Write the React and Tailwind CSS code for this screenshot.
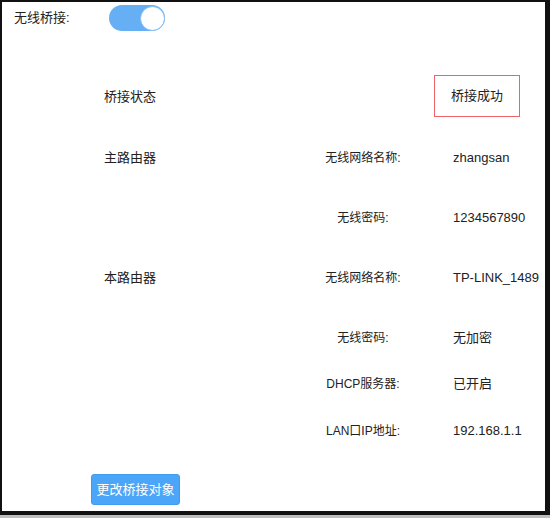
import React from "react";

const font = { fontFamily: '"Liberation Sans", "Noto Sans CJK SC", sans-serif' };

function Row({ left, mid, value, className = "" }) {
  return (
    <div className={`grid grid-cols-[214px_90px_1fr] items-center h-5 pl-[102px] ${className}`}>
      <div className="text-[13px] text-[#222]">{left}</div>
      <div className="text-[12px] text-[#222] text-center whitespace-nowrap">{mid}</div>
      <div className="text-[13px] text-[#222] pl-[45px] whitespace-nowrap">{value}</div>
    </div>
  );
}

export default function App() {
  return (
    <div className="w-[550px] h-[518px] bg-[#bdbdbd]" style={font}>
      <div className="h-[515px] bg-white border-l-2 border-t-2 border-r-[5px] border-b-[4px] border-[#111] flex flex-col">
        <div className="flex items-center h-[26px] mt-[3px] pl-[12px]">
          <div className="w-[95px] text-[13px] text-[#222]">无线桥接:</div>
          <div className="w-[56px] h-[26px] rounded-full bg-[#66aff5] flex items-center justify-end">
            <div className="w-[25px] h-[25px] rounded-full bg-white border border-[#7fbcf6]"></div>
          </div>
        </div>

        <div className="grid grid-cols-[214px_90px_1fr] items-center h-[42px] mt-[44px] pl-[102px]">
          <div className="text-[13px] text-[#222] pt-[2px]">桥接状态</div>
          <div></div>
          <div className="ml-[26px] w-[86px] h-[42px] border border-[#ef6266] flex items-center justify-center text-[13px] text-[#222]">
            桥接成功
          </div>
        </div>

        <Row className="mt-[31px]" left="主路由器" mid="无线网络名称:" value="zhangsan" />
        <Row className="mt-[40px]" left="" mid="无线密码:" value="1234567890" />
        <Row className="mt-[40px]" left="本路由器" mid="无线网络名称:" value="TP-LINK_1489" />
        <Row className="mt-[40px]" left="" mid="无线密码:" value="无加密" />
        <Row className="mt-[26px]" left="" mid="DHCP服务器:" value="已开启" />
        <Row className="mt-[27px]" left="" mid="LAN口IP地址:" value="192.168.1.1" />

        <div className="pl-[89px] mt-[33px]">
          <button className="w-[89px] h-[31px] rounded-[3px] bg-[#4ba6fa] border border-[#3f9cf0] text-white text-[13px]">
            更改桥接对象
          </button>
        </div>
      </div>
    </div>
  );
}
